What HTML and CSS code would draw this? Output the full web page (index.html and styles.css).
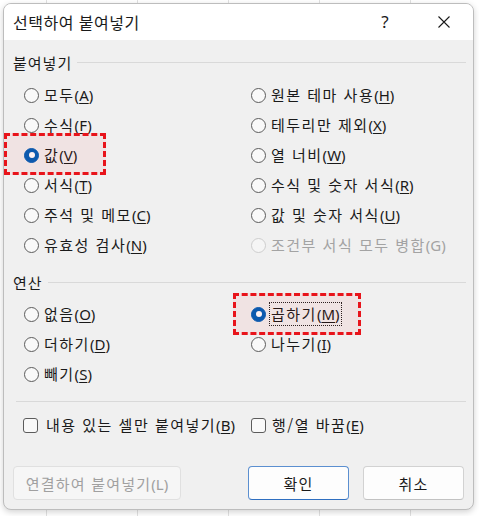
FILE: index.html
```html
<!DOCTYPE html>
<html lang="ko">
<head>
<meta charset="utf-8">
<title>선택하여 붙여넣기</title>
<link rel="stylesheet" href="styles.css">
</head>
<body>
<div class="dialog">
  <div class="titlebar">
    <span class="title">선택하여 붙여넣기</span>
    <span class="help">?</span>
    <span class="close">
      <svg width="12" height="12" viewBox="0 0 12 12"><path d="M0.5 0.5 L11.5 11.5 M11.5 0.5 L0.5 11.5" stroke="#1a1a1a" stroke-width="1.1" fill="none"/></svg>
    </span>
  </div>
  <div class="content">
    <div class="group-head"><span>붙여넣기</span><i class="rule"></i></div>
    <div class="opts">
      <label class="opt"><span class="radio"></span>모두<span class="key">(<u>A</u>)</span></label>
      <label class="opt"><span class="radio"></span>원본 테마 사용<span class="key">(<u>H</u>)</span></label>
      <label class="opt"><span class="radio"></span>수식<span class="key">(<u>F</u>)</span></label>
      <label class="opt"><span class="radio"></span>테두리만 제외<span class="key">(<u>X</u>)</span></label>
      <label class="opt marked"><span class="radio on"></span>값<span class="key">(<u>V</u>)</span><span class="mark mark-1"></span></label>
      <label class="opt"><span class="radio"></span>열 너비<span class="key">(<u>W</u>)</span></label>
      <label class="opt"><span class="radio"></span>서식<span class="key">(<u>T</u>)</span></label>
      <label class="opt"><span class="radio"></span>수식 및 숫자 서식<span class="key">(<u>R</u>)</span></label>
      <label class="opt"><span class="radio"></span>주석 및 메모<span class="key">(<u>C</u>)</span></label>
      <label class="opt"><span class="radio"></span>값 및 숫자 서식<span class="key">(<u>U</u>)</span></label>
      <label class="opt"><span class="radio"></span>유효성 검사<span class="key">(<u>N</u>)</span></label>
      <label class="opt disabled"><span class="radio"></span>조건부 서식 모두 병합<span class="key">(G)</span></label>
    </div>
    <div class="group-head second"><span>연산</span><i class="rule"></i></div>
    <div class="opts">
      <label class="opt"><span class="radio"></span>없음<span class="key">(<u>O</u>)</span></label>
      <label class="opt marked"><span class="radio on"></span><span class="focus">곱하기<span class="key">(<u>M</u>)</span></span><span class="mark mark-2"></span></label>
      <label class="opt"><span class="radio"></span>더하기<span class="key">(<u>D</u>)</span></label>
      <label class="opt"><span class="radio"></span>나누기<span class="key">(<u>I</u>)</span></label>
      <label class="opt"><span class="radio"></span>빼기<span class="key">(<u>S</u>)</span></label>
    </div>
    <div class="sep"></div>
    <div class="checks">
      <label class="chk"><span class="box"></span>내용 있는 셀만 붙여넣기<span class="key">(<u>B</u>)</span></label>
      <label class="chk"><span class="box"></span>행/열 바꿈<span class="key">(<u>E</u>)</span></label>
    </div>
    <div class="buttons">
      <button class="btn disabled-btn">연결하여 붙여넣기<span class="key">(L)</span></button>
      <button class="btn default-btn">확인</button>
      <button class="btn">취소</button>
    </div>
  </div>
</div>
</body>
</html>
```
FILE: styles.css
```css
html, body {
  margin: 0;
  padding: 0;
}
body {
  width: 479px;
  height: 516px;
  overflow: hidden;
  background-color: #ffffff;
  background-image: repeating-linear-gradient(90deg, transparent 0 46px, #e1e1e1 46px 47px, transparent 47px 91px);
  font-family: "Noto Sans CJK KR", "Malgun Gothic", sans-serif;
  color: #1a1a1a;
}
.dialog {
  margin: 3px 0 0 3px;
  width: 471px;
  height: 507px;
  box-sizing: border-box;
  border: 1px solid #bdbdbd;
  border-radius: 8px;
  background: #f0f0f0;
  box-shadow: 0 2px 6px rgba(0, 0, 0, 0.18);
  overflow: hidden;
  display: flex;
  flex-direction: column;
}
.titlebar {
  height: 36px;
  background: #ffffff;
  display: flex;
  align-items: center;
  padding-left: 9px;
  flex: none;
}
.title {
  font-size: 16px;
  line-height: 20px;
  letter-spacing: 0.5px;
  flex: 1;
  padding-bottom: 1px;
}
.help {
  font-family: "Noto Sans", sans-serif;
  font-size: 17px;
  line-height: 20px;
  width: 30px;
  text-align: center;
  margin-right: 38px;
  padding-bottom: 1px;
}
.close {
  width: 12px;
  height: 12px;
  margin-right: 23px;
  display: flex;
}
.content {
  flex: 1;
  padding: 13px 7px 0 9px;
  display: flex;
  flex-direction: column;
  letter-spacing: 1.5px;
}
.key {
  letter-spacing: 0;
  font-family: "Noto Sans", "Noto Sans CJK KR", sans-serif;
}
.group-head {
  display: flex;
  align-items: center;
  font-size: 15px;
  line-height: 20px;
  height: 20px;
  letter-spacing: 1px;
}
.group-head.second {
  margin-top: 13px;
}
.group-head .rule {
  flex: 1;
  height: 1px;
  background: #d9d9d9;
  margin-left: 5px;
  margin-top: -1px;
}
.opts {
  display: grid;
  grid-template-columns: 227px 1fr;
  padding-left: 11px;
  margin-top: 7px;
}
.group-head.second + .opts {
  margin-top: 6px;
}
.opt {
  position: relative;
  display: flex;
  align-items: center;
  height: 30px;
  font-size: 15px;
  line-height: 20px;
  white-space: nowrap;
}
.opt u, .chk u {
  text-underline-offset: 2px;
  text-decoration-thickness: 1px;
}
.radio {
  width: 13px;
  height: 13px;
  border: 1px solid #5c5c5c;
  border-radius: 50%;
  background: #f9f9f9;
  margin-right: 5px;
  flex: none;
  position: relative;
  box-sizing: content-box;
}
.radio.on {
  background: #005fb8;
  border-color: #005fb8;
}
.radio.on::after {
  content: "";
  position: absolute;
  left: 3.5px;
  top: 3.5px;
  width: 6px;
  height: 6px;
  border-radius: 50%;
  background: #ffffff;
}
.opt.disabled {
  color: #a3a3a3;
}
.opt.disabled .radio {
  border-color: #cdcdcd;
  background: #f5f5f5;
}
.focus {
  outline: 1px dotted #222;
  outline-offset: 0;
  padding: 1px 1px 1px 1px;
  margin-left: -1px;
}
.mark {
  position: absolute;
  border: 3px dashed #e8141b;
  background: rgba(255, 0, 0, 0.05);
  pointer-events: none;
}
.mark-1 {
  left: -20px;
  top: -7px;
  width: 96px;
  height: 36px;
}
.mark-2 {
  left: -18px;
  top: -6px;
  width: 122px;
  height: 36px;
}
.sep {
  height: 1px;
  background: #d9d9d9;
  margin: 12px 0 0 3px;
}
.checks {
  display: grid;
  grid-template-columns: 228px 1fr;
  padding-left: 10px;
  margin-top: 13px;
  height: 20px;
}
.chk {
  display: flex;
  align-items: center;
  font-size: 15px;
  line-height: 20px;
  white-space: nowrap;
}
.box {
  width: 13px;
  height: 13px;
  border: 1px solid #5c5c5c;
  border-radius: 3px;
  background: #f9f9f9;
  margin-right: 8px;
  flex: none;
}
.chk + .chk .box {
  margin-right: 6px;
}
.buttons {
  display: flex;
  margin-top: 31px;
  padding-left: 0;
  padding-right: 2px;
}
.btn {
  font-family: "Noto Sans CJK KR", "Malgun Gothic", sans-serif;
  font-size: 15px;
  letter-spacing: 1.2px;
  height: 34px;
  width: 101px;
  border: 1px solid #d2d2d2;
  border-bottom-color: #c2c2c2;
  border-radius: 4px;
  background: #fdfdfd;
  color: #1a1a1a;
  padding: 0;
  margin-left: 14px;
}
.disabled-btn {
  width: 168px;
  margin-left: 0;
  margin-right: auto;
  color: #a0a0a0;
  background: #f6f6f6;
  border-color: #e0e0e0;
}
.default-btn {
  border-color: #5b8fd0;
  border-bottom-color: #2f6fc0;
}
```
